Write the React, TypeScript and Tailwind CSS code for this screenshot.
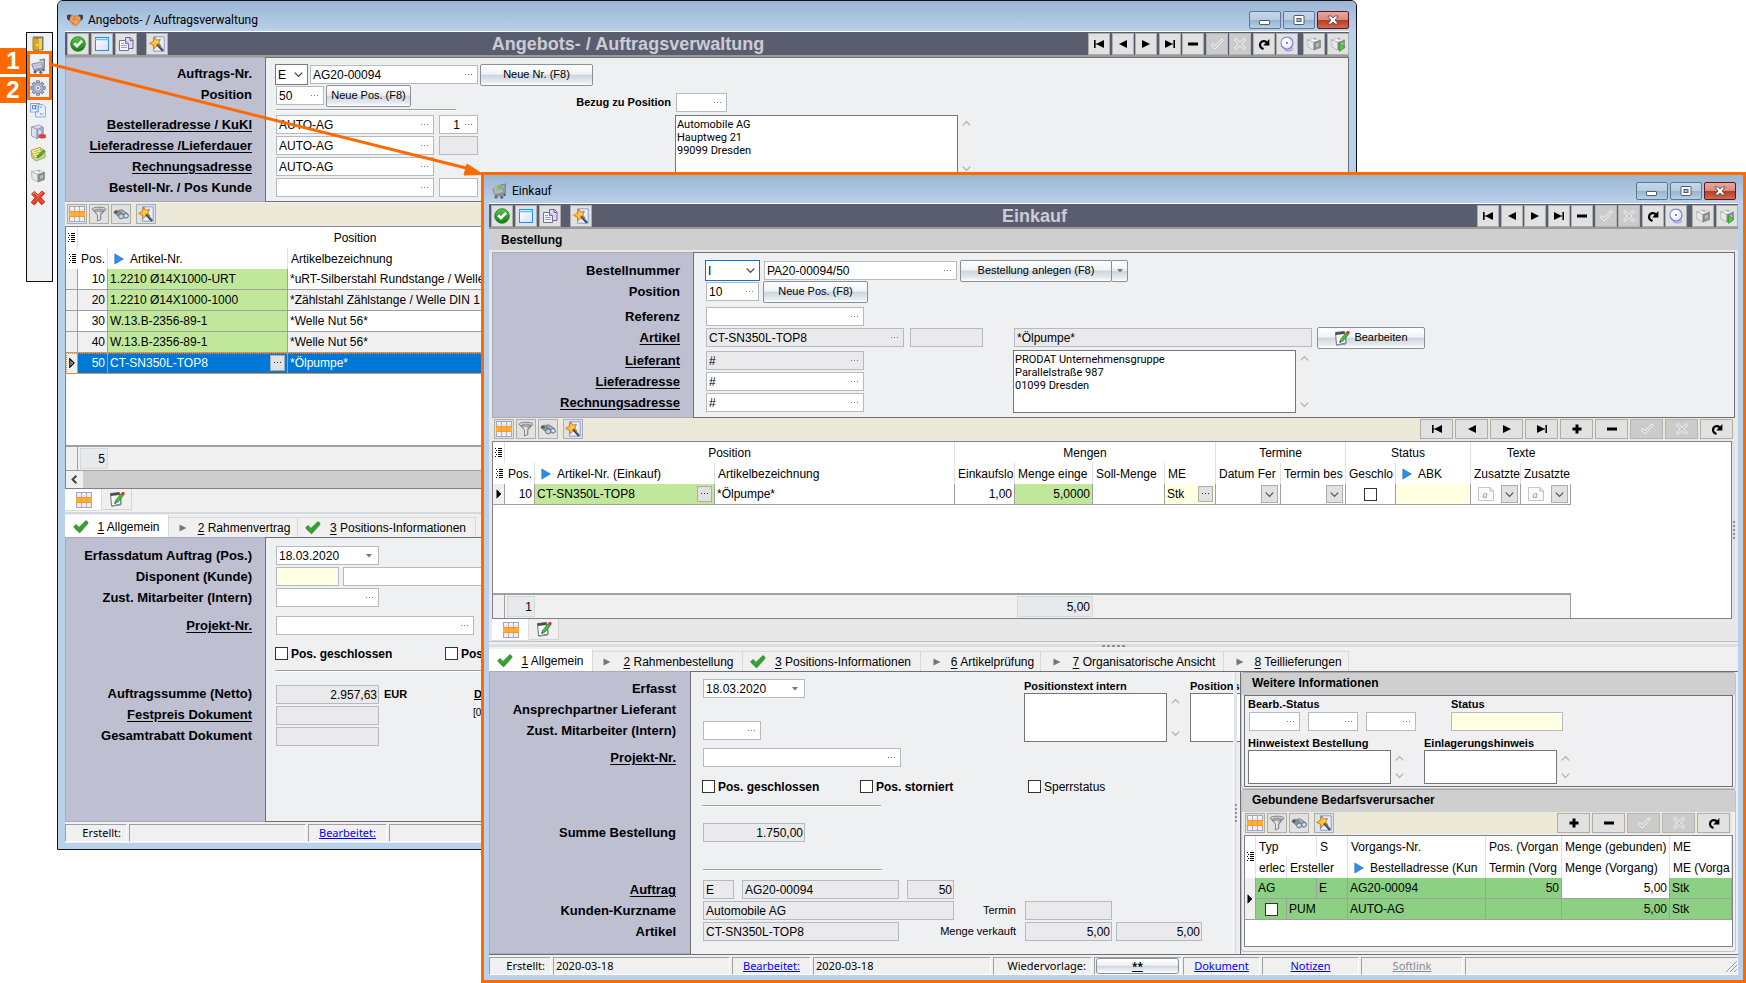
import type { ReactNode } from "react";

/* ---------- icons ---------- */

const Dots = ({ dark = false }: { dark?: boolean }) => (
  <svg width="8" height="2" viewBox="0 0 8 2" className="shrink-0" fill={dark ? "#222" : "#7c7c7c"}>
    <rect x="0" y="0" width="1" height="1" />
    <rect x="3" y="0" width="1" height="1" />
    <rect x="6" y="0" width="1" height="1" />
  </svg>
);

const OkIcon = () => (
  <svg width="16" height="16" viewBox="0 0 16 16">
    <defs>
      <linearGradient id="okg" x1="0" y1="0" x2="0" y2="1">
        <stop offset="0" stopColor="#5fc44a" />
        <stop offset="1" stopColor="#0f7d12" />
      </linearGradient>
    </defs>
    <circle cx="8" cy="8" r="7.3" fill="url(#okg)" stroke="#1c7a1c" strokeWidth=".8" />
    <path d="M3.2 8.2 L5.2 6.2 L7 8 L11 3.9 L13 5.8 L7 12 Z" fill="#fff" />
  </svg>
);

const WindowIcon = () => (
  <svg width="16" height="16" viewBox="0 0 16 16">
    <defs>
      <linearGradient id="wng" x1="0" y1="0" x2="1" y2="1">
        <stop offset="0" stopColor="#fff" />
        <stop offset="1" stopColor="#dcdcfa" />
      </linearGradient>
    </defs>
    <rect x="1.5" y="1.5" width="13" height="13" fill="url(#wng)" stroke="#1a94f2" />
    <path d="M1 3.5H15" stroke="#5cc3ff" strokeWidth="1.5" />
    <path d="M1 1.5H15" stroke="#1a94f2" />
  </svg>
);

const CopyIcon = () => (
  <svg width="16" height="16" viewBox="0 0 16 16">
    <path d="M7.5 1.5H12.5L15 4V12.5H7.5Z" fill="#dcd8ee" stroke="#7864a4" />
    <path d="M12 1.5V4.5H15" fill="none" stroke="#7864a4" />
    <path d="M1.5 4.5H7.5L10.5 7.5V14.5H1.5Z" fill="#f4f5fb" stroke="#6c7594" />
    <path d="M7.5 4.5V7.5H10.5" fill="#cfd4e8" stroke="#6c7594" />
    <path d="M3 9.5H9M3 11.5H9M3 7.5H6" stroke="#9aa2bf" />
  </svg>
);

const WizardIcon = () => (
  <svg width="16" height="16" viewBox="0 0 16 16">
    <path d="M4.5 .8H15.2V15.2H4.5Z" fill="#e8effc" stroke="#7f9fdc" />
    <path d="M5.8 1L7.6 4.2L11.4 3.4L9.8 7L12 10L8 9.8L5.2 12.6L4.2 9L.6 7.4L4.2 5.4Z" fill="#ffc03a" stroke="#cf7414" strokeWidth=".9" />
    <path d="M5.8 3L6.8 5.4L9.6 5L8 7Z" fill="#ffe9a0" />
    <path d="M8.2 8.2L14 14.8" stroke="#333a48" strokeWidth="2.4" />
    <path d="M8.8 8.2L14 13.8" stroke="#a4adbd" strokeWidth=".8" />
  </svg>
);

const GridIcon = () => (
  <svg width="16" height="16" viewBox="0 0 16 16">
    <rect x=".5" y=".5" width="15" height="15" fill="#f3f3fb" stroke="#a4a4bc" />
    <path d="M5.5 1V15M10.5 1V15" stroke="#a4a4bc" />
    <path d="M1 3.5H15M1 12.800H15" stroke="#dcdcec" strokeWidth=".7" />
    <rect x="0" y="5" width="16" height="6" fill="#fbae3c" />
    <path d="M0 5.400H16M0 10.600H16" stroke="#ec931e" strokeWidth=".8" />
    <path d="M5.5 6V10M10.5 6V10" stroke="#f3a02c" />
  </svg>
);

const FilterIcon = () => (
  <svg width="16" height="16" viewBox="0 0 16 16">
    <defs>
      <linearGradient id="fng" x1="0" y1="0" x2="1" y2="0">
        <stop offset="0" stopColor="#777" />
        <stop offset=".45" stopColor="#eee" />
        <stop offset="1" stopColor="#666" />
      </linearGradient>
    </defs>
    <path d="M1.5 3.5L6.500 9V15L9.800 13.500V9L14.5 3.5Z" fill="url(#fng)" stroke="#5c5c5c" strokeWidth=".7" />
    <ellipse cx="8" cy="3.2" rx="6.8" ry="2" fill="#e4e4e4" stroke="#6a6a6a" strokeWidth=".8" />
    <ellipse cx="8.2" cy="3.4" rx="4.5" ry="1" fill="#9a9a9a" />
  </svg>
);

const BinocularsIcon = () => (
  <svg width="16" height="16" viewBox="0 0 16 16">
    <path d="M.8 6.500Q1.600 3.800 4.600 4.200L10 7.600V11.500L7.400 12.300Z" fill="#8f9498" stroke="#5a5d60" strokeWidth=".6" />
    <path d="M6 4.200Q8.500 3 10.400 4.600L15 8V11L12 12Z" fill="#a8acb0" stroke="#5a5d60" strokeWidth=".6" />
    <circle cx="8.200" cy="10.400" r="2.500" fill="#bcd8f2" stroke="#5d656d" strokeWidth=".9" />
    <circle cx="13" cy="9.800" r="2.300" fill="#d0e5f8" stroke="#5d656d" strokeWidth=".9" />
    <ellipse cx="3" cy="6.200" rx="1.700" ry="1.300" fill="#56595c" />
  </svg>
);

type NavKind = "first" | "prev" | "next" | "last" | "plus" | "minus" | "check" | "cancel" | "refresh";

const NavIcon = ({ kind }: { kind: NavKind }) => (
  <svg width="14" height="14" viewBox="0 0 14 14">
    {kind === "first" && <path d="M2 3H3.6V11H2ZM12 3V11L5 7.6V7.6H3V6.4H5Z" />}
    {kind === "prev" && <path d="M11 3V11L3 7Z" />}
    {kind === "next" && <path d="M3 3V11L11 7Z" />}
    {kind === "last" && <path d="M10.4 3H12V11H10.4ZM2 3V11L9 7.6H11V6.4H9Z" />}
    {kind === "plus" && <path d="M5.5 2.5H8.5V5.5H11.5V8.5H8.5V11.5H5.5V8.5H2.5V5.5H5.5Z" />}
    {kind === "minus" && <path d="M2 5.5H12V8.5H2Z" />}
    {kind === "check" && <path d="M1.2 8.2L3 6.6L5.2 8.8L11.8 1.8L13.2 3.2L5.2 12Z" fill="#c4c4c4" stroke="#fff" strokeWidth=".9" />}
    {kind === "cancel" && (
      <path d="M1.6 3L3.2 1.6L7 5.4L10.8 1.6L12.4 3L8.6 7L12.4 11L10.8 12.4L7 8.6L3.2 12.4L1.6 11L5.4 7Z" fill="#c4c4c4" stroke="#fff" strokeWidth=".9" />
    )}
    {kind === "refresh" && (
      <>
        <path d="M6.5 12Q1.8 10 3.4 6.2Q5.8 2.6 10 5.4" fill="none" stroke="#000" strokeWidth="2.2" />
        <path d="M12.4 2V8.4H6.2Z" />
      </>
    )}
  </svg>
);

const BellIcon = () => (
  <svg width="16" height="16" viewBox="0 0 16 16">
    <ellipse cx="9.500" cy="12.8" rx="4" ry="2.2" fill="#cfcff0" stroke="#8484c4" strokeWidth=".8" />
    <circle cx="8" cy="7" r="6" fill="#e6e6fc" stroke="#7c7cc8" strokeWidth="1.100" />
    <circle cx="6.800" cy="6.2" r="4.2" fill="#fff" opacity=".8" />
    <circle cx="8" cy="7" r="1" fill="#5c5ca4" />
  </svg>
);

const CubeIcon = ({ play = false }: { play?: boolean }) => (
  <svg width="16" height="16" viewBox="0 0 16 16">
    <path d="M1.5 3.8L9 2L14.5 4.2L8 6.4Z" fill="#f8f9f8" stroke="#a8aaa8" strokeWidth=".6" />
    <path d="M1.5 3.8L8 6.4V14L2 11Z" fill="#e8e9e8" stroke="#a0a2a0" strokeWidth=".6" />
    <path d="M8 6.4L14.5 4.2V11.6L8 14Z" fill="#8e918f" stroke="#777" strokeWidth=".6" />
    <path d="M10 7.8L13 6.8V10L10 11Z" fill="#b9bcba" />
    <path d="M7.5 2.5L10 3.5" stroke="#58b99a" strokeWidth="1.2" />
    {play && <path d="M9.500 7.500V15.500L15 11.500Z" fill="#47d430" stroke="#1f8a14" strokeWidth=".6" />}
  </svg>
);

const DoorIcon = () => (
  <svg width="16" height="16" viewBox="0 0 16 16">
    <rect x="3.500" y="1" width="9.500" height="13" fill="#86888c" stroke="#606266" strokeWidth=".8" />
    <path d="M3 1.5L8.600 2.800V15.300L3 13.8Z" fill="#d9a820" stroke="#94700c" strokeWidth=".8" />
    <rect x="8.400" y="2.400" width="3.600" height="11" fill="#f8d240" />
    <circle cx="7" cy="9" r=".9" fill="#fff2b0" />
  </svg>
);

const CartIcon = ({ full = false }: { full?: boolean }) => (
  <svg width="16" height="16" viewBox="0 0 16 16">
    <path d="M9.500 2.200L14.200 1.500V9.800L12.6 11.6" fill="none" stroke="#85868c" strokeWidth="1.600" />
    <path d="M1.800 6L12 4L13 9.6L3.6 11.6Z" fill={full ? "#b4b8b8" : "#cacae6"} stroke="#82829c" strokeWidth=".9" />
    {full && <path d="M2.400 6L4.500 2.500L8.500 2L9 5Z" fill="#ee98a4" />}
    {full && <path d="M7 1.800L11 3V6L6.500 6.500Z" fill="#5bd44a" />}
    <path d="M3.600 11.800L12.6 10.200L13.200 12.200L4.600 14Z" fill="#8a8b92" />
    <circle cx="5" cy="14" r="1.500" fill="#606168" />
    <circle cx="10.800" cy="14.200" r="1.500" fill="#606168" />
    <circle cx="13.600" cy="12" r="1.200" fill="#606168" />
    <path d="M3 8.4L12 6.4" stroke="#a3a3c4" strokeWidth=".6" />
  </svg>
);

const teeth = [0, 45, 90, 135, 180, 225, 270, 315];

const GearIcon = () => (
  <svg width="16" height="16" viewBox="0 0 16 16">
    {teeth.map((a) => (
      <rect key={a} x="6.5" y=".8" width="3" height="3.4" fill="#a9afc8" stroke="#6b728e" strokeWidth=".7" transform={`rotate(${a} 8 8)`} />
    ))}
    <circle cx="8" cy="8" r="5.2" fill="#bcc2d8" stroke="#6b728e" strokeWidth=".7" />
    <circle cx="8" cy="8" r="3.1" fill="#e6e9f2" stroke="#7880a0" strokeWidth=".8" />
    <circle cx="8" cy="8" r="1.200" fill="#8890ac" />
  </svg>
);

const DocsIcon = () => (
  <svg width="16" height="16" viewBox="0 0 16 16">
    <rect x=".7" y="1.5" width="9" height="8.5" fill="#fff" stroke="#7d9ee0" />
    <rect x="2.6" y="3.6" width="3" height="3.4" fill="#cddafa" stroke="#456fce" strokeWidth=".8" />
    <path d="M7 1.5V10" stroke="#7d9ee0" />
    <path d="M8.500 2.500H13L15.400 5V15H5.500V10H8.500Z" fill="#eaf2ff" stroke="#84abe8" />
    <path d="M10 11L11.500 13L13 11.500M9.500 5H12" fill="none" stroke="#5c8be0" />
  </svg>
);

const CrateIcon = () => (
  <svg width="16" height="16" viewBox="0 0 16 16">
    <path d="M1.500 3L9 1L13 3V11L7 14.500L1.500 12Z" fill="#dcdff0" stroke="#8a8fa9" strokeWidth=".8" />
    <path d="M7 5.2L13 3V11L7 14.500Z" fill="#a9aeca" stroke="#8a8fa9" strokeWidth=".8" />
    <path d="M1.500 3L7 5.2V14.500" fill="none" stroke="#8a8fa9" strokeWidth=".8" />
    <rect x="8.4" y="6.4" width="2.4" height="3.4" fill="#dfe4fa" />
    <rect x="9.2" y="10.800" width="6.6" height="3.2" rx="1.4" fill="#e8472a" stroke="#a82812" strokeWidth=".6" />
  </svg>
);

const NoteIcon = () => (
  <svg width="16" height="16" viewBox="0 0 16 16">
    <path d="M1 4.5L10 1.5L15 5V11.5L6 15L2 12Z" fill="#c4e08c" stroke="#7f944c" strokeWidth=".7" />
    <path d="M1 4.5L10 1.5L12.4 9.5L4.4 12Z" fill="#fdf29a" stroke="#b09a2c" strokeWidth=".7" />
    <path d="M3.4 6L9.4 4M4 8L10 6M4.8 10L8 9" stroke="#a9923a" strokeWidth=".7" />
    <path d="M7 12L8 9L13.6 4L15 5.4L9.6 11Z" fill="#4fae34" stroke="#2c7818" strokeWidth=".6" />
  </svg>
);

const RedXIcon = () => (
  <svg width="16" height="16" viewBox="0 0 16 16">
    <path d="M1.5 4L4.6 1.4L8 5L11.8 1L14.8 3.2L11 7.4L14.8 12L11.6 14.8L8 10.6L4.4 15L1.2 12.4L5 7.8Z" fill="#e8442e" stroke="#a82418" strokeWidth=".8" />
    <path d="M3 4L4.6 2.6L8 6.2L11.8 2.2" fill="none" stroke="#ff9a84" strokeWidth=".8" />
  </svg>
);

const HandshakeIcon = () => (
  <svg width="16" height="16" viewBox="0 0 16 16">
    <path d="M0 3L4 2.5L5.5 6L2 9L0 6.5Z" fill="#33425e" />
    <path d="M16 3L12 2.5L10.5 6L14 9L16 6.5Z" fill="#33425e" />
    <path d="M3.4 4.6Q6 2.8 8 4.4Q10.4 2.6 12.8 4.6L13.8 8Q11 12.6 8.6 14Q4.4 12 2.6 8.2Z" fill="#f3a25e" stroke="#b5642a" strokeWidth=".7" />
    <path d="M8 4.6L6 7.6Q8 8.4 9.2 6.8L12.4 9.6M5 9.6L7.4 12" fill="none" stroke="#b5642a" strokeWidth=".7" />
  </svg>
);

const EditIcon = () => (
  <svg width="16" height="16" viewBox="0 0 16 16">
    <path d="M1.5 2.5L10.5 1.5L12 13L2.5 15Z" fill="#fafafa" stroke="#6e6e80" />
    <path d="M1.5 2.6L10.4 1.6V4L1.7 5Z" fill="#4c4c50" />
    <path d="M12 5V14L3 15.2" fill="none" stroke="#8888b4" />
    <path d="M5.6 12.6L6.6 9.4L12 2.8L14.4 4.6L9 11Z" fill="#3fc33a" stroke="#1d7a1d" strokeWidth=".7" />
    <path d="M12 2.8L13 1L15.6 1.4L15.6 3L14.4 4.6Z" fill="#e02a20" />
    <path d="M5.6 12.6L6 11.2L7 12Z" fill="#222" />
  </svg>
);

const TickIcon = () => (
  <svg width="16" height="14" viewBox="0 0 16 14" className="shrink-0">
    <path d="M2 9L4 6.6L6.8 9.4L14 2.4L15.6 4L7 13.6Z" fill="#b9bdb9" />
    <path d="M.6 7L3 4.400L6 7.400L13 .6L15.200 2.6L6.400 12.600Z" fill="#2fa829" stroke="#167914" strokeWidth=".7" />
  </svg>
);

const GrayPlay = () => (
  <svg width="8" height="8" viewBox="0 0 8 8" className="shrink-0">
    <path d="M.5 .5V7.5L7.5 4Z" fill="#777" />
  </svg>
);

const BluePlay = () => (
  <svg width="10" height="12" viewBox="0 0 10 12" className="shrink-0">
    <path d="M.8 1V11L9.4 6Z" fill="#2b90ea" stroke="#1766bd" strokeWidth=".6" />
  </svg>
);

const ListMark = () => (
  <svg width="7" height="10" viewBox="0 0 7 10" className="mx-auto block" fill="#000">
    {[0, 2, 4, 6, 8].map((y) => (
      <g key={y}>
        <rect x={y % 4 === 0 ? 0 : 1} y={y} width="1" height="1" />
        <rect x="3" y={y} width="4" height="1" />
      </g>
    ))}
  </svg>
);

const Chevron = ({ dir = "down", color = "#444" }: { dir?: "up" | "down" | "left"; color?: string }) => (
  <svg width="9" height="9" viewBox="0 0 9 9" className="pointer-events-none shrink-0" fill="none" stroke={color} strokeWidth="1.3">
    {dir === "down" && <path d="M.8 2.6L4.5 6.4L8.2 2.6" />}
    {dir === "up" && <path d="M.8 6.4L4.5 2.6L8.2 6.4" />}
    {dir === "left" && <path d="M6.4 .8L2.6 4.5L6.4 8.2" strokeWidth="2" />}
  </svg>
);

const DownTriangle = () => (
  <svg width="6" height="4" viewBox="0 0 6 4" className="shrink-0">
    <path d="M0 0H6L3 3.4Z" fill="#777" />
  </svg>
);

const CurrentRow = ({ hollow = false }: { hollow?: boolean }) => (
  <svg width="6" height="10" viewBox="0 0 6 10" className="mx-auto block">
    <path d="M.8 .8V9.2L5 5Z" fill={hollow ? "#fff" : "#000"} stroke="#000" strokeWidth={hollow ? 1.2 : 0.6} />
    {hollow && <path d="M2.200 3.500V6.500" stroke="#000" strokeWidth=".8" />}
  </svg>
);

const TextIcon = () => (
  <svg width="16" height="14" viewBox="0 0 16 14" className="shrink-0">
    <path d="M.5 .5H12L15.5 4V13.5H.5Z" fill="#fbfbfb" stroke="#c6c6c6" />
    <path d="M12 .5V4H15.5" fill="none" stroke="#b5b5b5" />
    <text x="4.4" y="10.6" fontSize="10" fontStyle="italic" fill="#8b8b8b" fontFamily="Liberation Serif">a</text>
  </svg>
);

/* ---------- controls ---------- */

type FieldProps = {
  id: string;
  label?: string;
  width: string;
  value?: string;
  dots?: boolean;
  date?: boolean;
  right?: boolean;
  tone?: "white" | "gray" | "yellow";
};

const tones = { white: "bg-white", gray: "bg-[#eaeaec]", yellow: "bg-[#ffffe1]" };

const Field = ({ id, label, width, value = "", dots, date, right, tone = "white" }: FieldProps) => (
  <div className={`flex h-[19px] shrink-0 items-center border border-[#b5b9c0] ${tones[tone]} ${width} ${dots ? "pr-1" : date ? "pr-[6px]" : ""}`}>
    <input
      id={id}
      aria-label={label}
      defaultValue={value}
      className={`h-full w-0 min-w-0 flex-1 bg-transparent text-[12px] text-black outline-none ${right ? "pr-px text-right" : "pl-[2px]"} ${right && dots ? "mr-1" : ""}`}
    />
    {dots && <Dots />}
    {date && <DownTriangle />}
  </div>
);

const Combo = ({ id, value, width, active = false }: { id: string; value: string; width: string; active?: boolean }) => (
  <div className={`grid h-[21px] shrink-0 items-center border bg-white ${active ? "border-[#0078d7]" : "border-[#7a7a7a]"} ${width}`}>
    <select id={id} defaultValue={value} className="col-start-1 row-start-1 h-full w-full appearance-none bg-transparent px-[2px] text-[12px] outline-none">
      <option>{value}</option>
    </select>
    <span className="pointer-events-none col-start-1 row-start-1 mr-1 justify-self-end">
      <Chevron />
    </span>
  </div>
);

const Push = ({ children, width }: { children: ReactNode; width: string }) => (
  <button
    type="button"
    className={`flex h-[22px] shrink-0 items-center justify-center gap-1 rounded-[2px] border border-[#8a909b] bg-[linear-gradient(#ffffff,#eff2f5_45%,#cdd6de_52%,#e6ebef_85%,#ffffff)] text-[11px] text-black ${width}`}
  >
    {children}
  </button>
);

const Check = ({ id, children, bold = true }: { id: string; children: ReactNode; bold?: boolean }) => (
  <span className="flex shrink-0 items-center gap-[3px] whitespace-nowrap">
    <input id={id} type="checkbox" className="h-[13px] w-[13px] appearance-none border border-[#333] bg-white checked:bg-[#333]" />
    <label htmlFor={id} className={bold ? "text-[12px] font-bold" : "text-[12px]"}>
      {children}
    </label>
  </span>
);

const ScrollHints = () => (
  <div className="flex w-4 shrink-0 flex-col items-center justify-between bg-[#f0f0f0] py-1">
    <Chevron dir="up" color="#b0b0b0" />
    <Chevron color="#b0b0b0" />
  </div>
);

const Memo = ({ id, label, width, height, value = "" }: { id: string; label?: string; width: string; height: string; value?: string }) => (
  <div className={`flex shrink-0 ${height}`}>
    <textarea
      id={id}
      aria-label={label}
      defaultValue={value}
      className={`block h-full resize-none overflow-hidden border border-[#767676] bg-white px-px pt-[2px] font-['Roboto',sans-serif] text-[11px] leading-[13px] outline-none ${width}`}
    />
    <ScrollHints />
  </div>
);

const L = ({ htmlFor, children, u = false, gap = "" }: { htmlFor: string; children: ReactNode; u?: boolean; gap?: string }) => (
  <label htmlFor={htmlFor} className={`flex h-[21px] items-center text-[13px] font-bold whitespace-nowrap ${u ? "underline underline-offset-2" : ""} ${gap}`}>
    {children}
  </label>
);

const Labels = ({ children, pad }: { children: ReactNode; pad: string }) => (
  <div className={`flex shrink-0 flex-col items-end border border-r-0 border-[#a9aabc] bg-[#bebfd0] ${pad}`}>{children}</div>
);

const Row = ({ children, gap = "" }: { children?: ReactNode; gap?: string }) => <div className={`flex h-[21px] items-center ${gap}`}>{children}</div>;

const Rule = ({ className }: { className: string }) => <hr className={`h-[2px] border-t border-b border-t-[#a0a0a0] border-b-white ${className}`} />;

const ToolButton = ({ name, children, size = "h-[22px] w-[22px]", off = false }: { name: string; children: ReactNode; size?: string; off?: boolean }) => (
  <button
    type="button"
    aria-label={name}
    className={`flex shrink-0 items-center justify-center border ${size} ${off ? "border-[#b4b4b4] bg-[#cbcbcb]" : "border-[#adadad] bg-[#e1e1e1]"}`}
  >
    {children}
  </button>
);

const navNames: Record<NavKind, string> = {
  first: "Erster",
  prev: "Zurück",
  next: "Weiter",
  last: "Letzter",
  plus: "Neu",
  minus: "Löschen",
  check: "Speichern",
  cancel: "Abbrechen",
  refresh: "Aktualisieren",
};

const Nav = ({ kinds, size }: { kinds: NavKind[]; size: string }) => (
  <>
    {kinds.map((k) => (
      <ToolButton key={k} name={navNames[k]} size={size} off={k === "check" || k === "cancel"}>
        <NavIcon kind={k} />
      </ToolButton>
    ))}
  </>
);

const HeadBar = ({ title }: { title: string }) => (
  <div className="flex h-[26px] shrink-0 items-center gap-[2px] border-t border-b-2 border-t-white border-b-[#9a9a9a] bg-[#5a5d6e] pl-[2px]">
    <ToolButton name="OK">
      <OkIcon />
    </ToolButton>
    <ToolButton name="Fenster">
      <WindowIcon />
    </ToolButton>
    <ToolButton name="Kopieren">
      <CopyIcon />
    </ToolButton>
    <span className="w-[5px]" />
    <ToolButton name="Assistent">
      <WizardIcon />
    </ToolButton>
    <h1 className="flex-1 text-center text-[18px] leading-[22px] font-bold text-[#cbccd8]">{title}</h1>
    <div className="flex w-[210px] justify-between">
      <Nav kinds={["first", "prev", "next", "last", "minus", "check", "cancel", "refresh"]} size="h-[22px] w-[22px]" />
      <ToolButton name="Erinnerung">
        <BellIcon />
      </ToolButton>
    </div>
    <span className="w-px" />
    <ToolButton name="Drucken">
      <CubeIcon />
    </ToolButton>
    <ToolButton name="Ausführen">
      <CubeIcon play />
    </ToolButton>
  </div>
);

const TitleBar = ({ icon, title, size }: { icon: ReactNode; title: string; size: string }) => (
  <div className={`flex shrink-0 items-center bg-[linear-gradient(#9bb5d3,#b9d1ea)] pr-[7px] ${size}`}>
    {icon}
    <span className="ml-[5px] flex-1 font-['Roboto',sans-serif] text-[12px]">{title}</span>
    <div className="flex gap-[2px]">
      <button type="button" aria-label="Minimieren" className="flex h-[18px] w-8 items-center justify-center rounded-[2px] border border-[#5f7590] bg-[linear-gradient(#c4d7ea,#b4cce3_50%,#94b2cf_50%,#b4d0e8)]">
        <svg width="12" height="10" viewBox="0 0 12 10">
          <rect x=".5" y="5.5" width="10" height="4" rx=".6" fill="#fff" stroke="#50586a" />
        </svg>
      </button>
      <button type="button" aria-label="Maximieren" className="flex h-[18px] w-8 items-center justify-center rounded-[2px] border border-[#5f7590] bg-[linear-gradient(#c4d7ea,#b4cce3_50%,#94b2cf_50%,#b4d0e8)]">
        <svg width="12" height="10" viewBox="0 0 12 10">
          <rect x="1" y=".5" width="10" height="9" rx=".6" fill="#fff" stroke="#50586a" />
          <rect x="4" y="3.5" width="4" height="3" fill="#a9c0d8" stroke="#50586a" />
        </svg>
      </button>
      <button type="button" aria-label="Schließen" className="flex h-[18px] w-8 items-center justify-center rounded-[2px] border border-[#5a1a1e] bg-[linear-gradient(#e6a89c,#d98b7b_48%,#b93a22_50%,#cf6a4e)]">
        <svg width="12" height="10" viewBox="0 0 12 10">
          <path d="M.8 1H4.2L6 3L7.8 1H11.2L8 5L11.2 9H7.8L6 7L4.2 9H.8L4 5Z" fill="#fff" stroke="#50404a" strokeWidth=".8" />
        </svg>
      </button>
    </div>
  </div>
);

const GridBar = ({ children }: { children?: ReactNode }) => (
  <div className="flex h-[22px] shrink-0 items-center gap-[2px] bg-[#ece9d8] pr-[2px] pl-[2px]">
    <ToolButton name="Tabelle" size="h-5 w-5">
      <GridIcon />
    </ToolButton>
    <ToolButton name="Filter" size="h-5 w-5">
      <FilterIcon />
    </ToolButton>
    <ToolButton name="Suchen" size="h-5 w-5">
      <BinocularsIcon />
    </ToolButton>
    <span className="w-px" />
    <ToolButton name="Assistent" size="h-5 w-5">
      <WizardIcon />
    </ToolButton>
    <div className="flex flex-1 justify-end gap-[2px]">{children}</div>
  </div>
);

const ViewTabs = () => (
  <div className="flex h-[22px] shrink-0">
    <button type="button" aria-label="Tabellenansicht" className="flex w-[37px] items-center justify-center border-r border-b border-[#dcdcdc] bg-white pl-[2px]">
      <GridIcon />
    </button>
    <button type="button" aria-label="Bearbeitungsansicht" className="flex h-[21px] w-[30px] items-center justify-center border-r border-b border-[#d4d4d4] bg-[#f0f0f0]">
      <EditIcon />
    </button>
  </div>
);

type TabInfo = { n: string; text: string; on?: boolean; width: string; pad: string };

const Tabs = ({ items }: { items: TabInfo[] }) => (
  <div role="tablist" className="flex h-[22px] shrink-0 bg-[#f0f0f0] text-[12px]">
    {items.map((t, i) => (
      <button
        key={t.n}
        type="button"
        role="tab"
        aria-selected={i === 0}
        className={`flex shrink-0 items-center border-r border-[#d9d9d9] whitespace-nowrap ${t.width} ${t.pad} ${i === 0 ? "bg-white pt-px" : "mt-[2px] border-t"}`}
      >
        {t.on ? <TickIcon /> : <GrayPlay />}
        <span className={t.on ? "flex-1 text-center" : "flex-1 pl-1 text-center"}>
          <u className="underline-offset-2">{t.n}</u> {t.text}
        </span>
      </button>
    ))}
  </div>
);

const Cell = ({ width, children, align = "justify-center" }: { width: string; children?: ReactNode; align?: string }) => (
  <div className={`flex h-[18px] items-center overflow-hidden border border-t-[#a0a0a0] border-r-white border-b-white border-l-[#a0a0a0] whitespace-nowrap ${width} ${align}`}>{children}</div>
);

const Dd = () => (
  <span className="flex h-[18px] w-[17px] shrink-0 items-center justify-center border border-[#adadad] bg-[#e1e1e1]">
    <Chevron color="#555" />
  </span>
);

const Ellipsis = () => (
  <button type="button" aria-label="Auswählen" className="flex h-4 w-[15px] shrink-0 items-center justify-center border border-[#adadad] bg-[#e1e1e1]">
    <Dots dark />
  </button>
);

const th = "h-[21px] overflow-hidden border-r border-[#e0e0e0] px-[3px] py-0 text-left font-normal whitespace-nowrap";
const thc = "h-[21px] overflow-hidden border-r border-[#e0e0e0] p-0 text-center font-normal whitespace-nowrap";
const mk = "h-[21px] border-r border-[#e0e0e0] p-0";
const td = "h-[21px] overflow-hidden border-r border-b border-[#a0a0a0] px-[2px] py-0 whitespace-nowrap";

/* ---------- back window ---------- */

const orderRows = [
  { pos: 10, nr: "1.2210 Ø14X1000-URT", name: "*uRT-Silberstahl Rundstange / Welle" },
  { pos: 20, nr: "1.2210 Ø14X1000-1000", name: "*Zählstahl Zählstange / Welle DIN 1" },
  { pos: 30, nr: "W.13.B-2356-89-1", name: "*Welle Nut 56*" },
  { pos: 40, nr: "W.13.B-2356-89-1", name: "*Welle Nut 56*" },
  { pos: 50, nr: "CT-SN350L-TOP8", name: "*Ölpumpe*", selected: true },
];

const OrderTable = () => (
  <table className="w-[567px] table-fixed border-separate border-spacing-0 text-[12px]">
    <colgroup>
      <col className="w-3" />
      <col className="w-[30px]" />
      <col className="w-[180px]" />
      <col className="w-[345px]" />
    </colgroup>
    <thead>
      <tr>
        <th className={mk}><ListMark /></th>
        <th colSpan={3} className={thc}>Position</th>
      </tr>
      <tr>
        <th className="h-[21px] p-0"><ListMark /></th>
        <th className={th}>Pos.</th>
        <th className={th}>
          <span className="flex items-center gap-[6px] pl-[3px]"><BluePlay />Artikel-Nr.</span>
        </th>
        <th className={th}>Artikelbezeichnung</th>
      </tr>
    </thead>
    <tbody>
      {orderRows.map((r, i) => {
        const bg = r.selected ? "bg-[#0078d7] text-white" : i % 2 ? "bg-[#f0f0f0]" : "bg-white";
        return (
          <tr key={r.pos} className={r.selected ? "outline-1 -outline-offset-1 outline-[#e08a4a] outline-dotted" : ""}>
            <td className="h-[21px] border-r border-b border-[#a0a0a0] bg-[#f0f0f0] p-0">{r.selected && <CurrentRow hollow />}</td>
            <td className={`${td} text-right ${bg}`}>{r.pos}</td>
            <td className={`${td} ${r.selected ? bg : "bg-[#c1e79a]"}`}>
              <span className="flex items-center justify-between">
                {r.nr}
                {r.selected && <Ellipsis />}
              </span>
            </td>
            <td className={`${td} ${bg}`}>{r.name}</td>
          </tr>
        );
      })}
    </tbody>
  </table>
);

const OrderWindow = () => (
  <section className="absolute top-0 left-[57px] flex h-[850px] w-[1300px] flex-col overflow-hidden rounded-t-[6px] border border-[#111] bg-[#b9d1ea]">
    <TitleBar icon={<HandshakeIcon />} title="Angebots- / Auftragsverwaltung" size="h-[30px] pl-[9px] pt-[7px]" />
    <div className="mx-[7px] mb-[6px] flex min-h-0 flex-1 flex-col bg-[#f0f0f0]">
      <HeadBar title="Angebots- / Auftragsverwaltung" />
      <div className="flex h-[145px] shrink-0">
        <Labels pad="w-[200px] pr-[13px] pt-[5px]">
          <L htmlFor="auftrag">Auftrags-Nr.</L>
          <L htmlFor="pos">Position</L>
          <L htmlFor="besteller" u gap="mt-[9px]">Bestelleradresse / KuKl</L>
          <L htmlFor="liefer" u>Lieferadresse /Lieferdauer</L>
          <L htmlFor="rechnung" u>Rechnungsadresse</L>
          <L htmlFor="bestellnr">Bestell-Nr. / Pos Kunde</L>
        </Labels>
        <div className="flex-1 border border-[#6f7076] bg-[#eff0f2] pt-[6px] pl-[9px]">
          <Row gap="gap-[2px]">
            <Combo id="auftragArt" value="E" width="w-[33px]" />
            <Field id="auftrag" width="w-[168px]" value="AG20-00094" dots />
            <Push width="w-[113px]">Neue Nr. (F8)</Push>
          </Row>
          <div className="flex">
            <div className="w-[298px] shrink-0 pl-px">
              <Row gap="gap-[2px]">
                <Field id="pos" width="w-12" value="50" dots />
                <Push width="w-[85px]">Neue Pos. (F8)</Push>
              </Row>
              <Rule className="mt-[3px] mb-[3px] w-[180px]" />
              <Row gap="gap-[5px]">
                <Field id="besteller" width="w-[158px]" value="AUTO-AG" dots />
                <Field id="kukl" label="KuKl" width="w-[39px]" value="1" dots right />
              </Row>
              <Row gap="gap-[5px]">
                <Field id="liefer" width="w-[158px]" value="AUTO-AG" dots />
                <Field id="dauer" label="Lieferdauer" width="w-[39px]" tone="gray" />
              </Row>
              <Row>
                <Field id="rechnung" width="w-[158px]" value="AUTO-AG" dots />
              </Row>
              <Row gap="gap-[5px]">
                <Field id="bestellnr" width="w-[158px]" dots />
                <Field id="poskunde" label="Pos Kunde" width="w-[39px]" />
              </Row>
            </div>
            <div className="pt-[7px]">
              <Row gap="gap-[5px]">
                <label htmlFor="bezug" className="w-[98px] text-right text-[11px] font-bold whitespace-nowrap">Bezug zu Position</label>
                <Field id="bezug" width="w-[51px]" dots />
              </Row>
              <div className="mt-[2px] ml-[102px]">
                <Memo id="adresse" label="Adresse" width="w-[283px]" height="h-[62px]" value={"Automobile AG\nHauptweg 21\n99099 Dresden"} />
              </div>
            </div>
          </div>
        </div>
      </div>
      <div className="pt-px">
        <GridBar />
      </div>
      <div className="mt-px flex min-h-0 flex-1 flex-col border border-[#7f828c] bg-white">
        <OrderTable />
        <div className="flex-1" />
        <div className="flex h-[26px] shrink-0 border-t-2 border-b border-[#a0a0a0] bg-[#f0f0f0] text-[12px]">
          <span className="w-3 border-r border-[#a0a0a0]" />
          <span className="my-px ml-[2px] flex w-7 items-center justify-end border border-[#d4d8da] bg-[#e6eaec] pr-[2px]">5</span>
        </div>
        <div className="flex h-[17px] shrink-0 items-center bg-[#cdcdcd]">
          <button type="button" aria-label="Nach links" className="flex h-full w-[17px] items-center justify-center bg-[#f0f0f0]">
            <Chevron dir="left" />
          </button>
        </div>
      </div>
      <ViewTabs />
      <div className="my-px h-[2px] bg-[#d5d8dd]" />
      <Tabs
        items={[
          { n: "1", text: "Allgemein", on: true, width: "w-[104px]", pad: "pl-2" },
          { n: "2", text: "Rahmenvertrag", width: "w-[129px]", pad: "pl-[10px]" },
          { n: "3", text: "Positions-Informationen", on: true, width: "w-[178px]", pad: "pl-[7px]" },
        ]}
      />
      <div className="flex h-[285px] shrink-0">
        <Labels pad="w-[200px] pr-[13px] pt-[7px]">
          <L htmlFor="erfasst1">Erfassdatum Auftrag (Pos.)</L>
          <L htmlFor="disponent">Disponent (Kunde)</L>
          <L htmlFor="zust1">Zust. Mitarbeiter (Intern)</L>
          <L htmlFor="projekt1" u gap="mt-[7px]">Projekt-Nr.</L>
          <L htmlFor="summe1" gap="mt-[47px]">Auftragssumme (Netto)</L>
          <L htmlFor="festpreis" u>Festpreis Dokument</L>
          <L htmlFor="rabatt">Gesamtrabatt Dokument</L>
        </Labels>
        <div className="flex-1 border border-[#6f7076] bg-[#eff0f2] pt-[7px] pl-[10px]">
          <Row><Field id="erfasst1" width="w-[103px]" value="18.03.2020" date /></Row>
          <Row gap="gap-1">
            <Field id="disponent" width="w-[63px]" tone="yellow" />
            <Field id="disponentName" label="Disponent Name" width="w-[240px]" />
          </Row>
          <Row><Field id="zust1" width="w-[103px]" dots /></Row>
          <Row gap="mt-[7px]"><Field id="projekt1" width="w-[198px]" dots /></Row>
          <div className="-ml-px">
            <Row gap="mt-[7px]">
              <span className="w-[170px]"><Check id="geschl1">Pos. geschlossen</Check></span>
              <Check id="storn1">Pos. storniert</Check>
            </Row>
            <Rule className="mt-[6px] mb-3 w-[360px]" />
          </div>
          <Row>
            <Field id="summe1" width="w-[103px]" value="2.957,63" right tone="gray" />
            <span className="ml-[5px] w-[90px] text-[11px] font-bold">EUR</span>
            <a href="#dokument1" className="text-[11px] font-bold underline">Dokument</a>
          </Row>
          <Row>
            <Field id="festpreis" width="w-[103px]" tone="gray" />
            <span className="ml-[94px] self-start text-[10px]">[0,00]</span>
          </Row>
          <Row><Field id="rabatt" width="w-[103px]" tone="gray" /></Row>
        </div>
      </div>
      <div className="flex h-[21px] shrink-0 gap-[2px] pt-[2px] font-['Noto_Sans',sans-serif] text-[11px]">
        <Cell width="w-[62px]" align="justify-end pr-[5px]">Erstellt:</Cell>
        <Cell width="w-[177px]" />
        <Cell width="w-[79px]"><a href="#bearbeitet" className="text-[#0000ff] underline">Bearbeitet:</a></Cell>
        <Cell width="flex-1" />
      </div>
    </div>
  </section>
);

/* ---------- front window ---------- */

const PurchaseTable = () => (
  <table className="w-[1078px] table-fixed border-separate border-spacing-0 text-[12px]">
    <colgroup>
      <col className="w-3" />
      <col className="w-[30px]" />
      <col className="w-[180px]" />
      <col className="w-[240px]" />
      <col className="w-[60px]" />
      <col className="w-[78px]" />
      <col className="w-[72px]" />
      <col className="w-[51px]" />
      <col className="w-[65px]" />
      <col className="w-[65px]" />
      <col className="w-[50px]" />
      <col className="w-[75px]" />
      <col className="w-[50px]" />
      <col className="w-[50px]" />
    </colgroup>
    <thead>
      <tr>
        <th className={mk}><ListMark /></th>
        <th colSpan={3} className={thc}>Position</th>
        <th colSpan={4} className={thc}>Mengen</th>
        <th colSpan={2} className={thc}>Termine</th>
        <th colSpan={2} className={thc}>Status</th>
        <th colSpan={2} className="h-[21px] p-0 text-center font-normal">Texte</th>
      </tr>
      <tr>
        <th className="h-[21px] p-0"><ListMark /></th>
        <th className={th}>Pos.</th>
        <th className={th}>
          <span className="flex items-center gap-[6px] pl-[3px]"><BluePlay />Artikel-Nr. (Einkauf)</span>
        </th>
        <th className={th}>Artikelbezeichnung</th>
        <th className={th}>Einkaufslo</th>
        <th className={th}>Menge einge</th>
        <th className={th}>Soll-Menge</th>
        <th className={th}>ME</th>
        <th className={th}>Datum Fer</th>
        <th className={th}>Termin bes</th>
        <th className={th}>Geschlo</th>
        <th className={th}>
          <span className="flex items-center gap-[6px] pl-[3px]"><BluePlay />ABK</span>
        </th>
        <th className={th}>Zusatzte</th>
        <th className="h-[21px] overflow-hidden px-[3px] py-0 text-left font-normal whitespace-nowrap">Zusatzte</th>
      </tr>
    </thead>
    <tbody>
      <tr>
        <td className="h-[21px] border-r border-b border-[#a0a0a0] bg-[#f0f0f0] p-0"><CurrentRow /></td>
        <td className={`${td} text-right`}>10</td>
        <td className={`${td} bg-[#c1e79a]`}>
          <span className="flex items-center justify-between">CT-SN350L-TOP8<Ellipsis /></span>
        </td>
        <td className={td}>*Ölpumpe*</td>
        <td className={`${td} text-right`}>1,00</td>
        <td className={`${td} bg-[#c1e79a] text-right`}>5,0000</td>
        <td className={td} />
        <td className={`${td} bg-[#ffffe1]`}>
          <span className="flex items-center justify-between">Stk<Ellipsis /></span>
        </td>
        <td className={td}><span className="flex justify-end"><Dd /></span></td>
        <td className={td}><span className="flex justify-end"><Dd /></span></td>
        <td className={td}>
          <input type="checkbox" aria-label="Geschlossen" className="mx-auto block h-[13px] w-[13px] appearance-none border border-[#333] bg-white checked:bg-[#333]" />
        </td>
        <td className={`${td} bg-[#ffffe1]`} />
        <td className={td}><span className="flex items-center justify-end gap-[7px]"><TextIcon /><Dd /></span></td>
        <td className={td}><span className="flex items-center justify-end gap-[7px]"><TextIcon /><Dd /></span></td>
      </tr>
    </tbody>
  </table>
);

const gTd = "h-[21px] overflow-hidden border-r border-b border-[#a0a0a0] bg-[#8cd083] px-[2px] py-0 whitespace-nowrap";

const DemandTable = () => (
  <table className="w-full table-fixed border-separate border-spacing-0 text-[12px]">
    <colgroup>
      <col className="w-[11px]" />
      <col className="w-[31px]" />
      <col className="w-[30px]" />
      <col className="w-[31px]" />
      <col className="w-[138px]" />
      <col className="w-[76px]" />
      <col className="w-[108px]" />
      <col />
    </colgroup>
    <thead>
      <tr>
        <th rowSpan={2} className={mk}><ListMark /></th>
        <th colSpan={2} className={th}>Typ</th>
        <th className={th}>S</th>
        <th className={th}>Vorgangs-Nr.</th>
        <th className={th}>Pos. (Vorgan</th>
        <th className={th}>Menge (gebunden)</th>
        <th className={th}>ME</th>
      </tr>
      <tr>
        <th className={th}>erlec</th>
        <th colSpan={2} className={th}>Ersteller</th>
        <th className={th}>
          <span className="flex items-center gap-[6px] pl-[3px]"><BluePlay />Bestelladresse (Kun</span>
        </th>
        <th className={th}>Termin (Vorg</th>
        <th className={th}>Menge (Vorgang)</th>
        <th className={th}>ME (Vorga</th>
      </tr>
    </thead>
    <tbody>
      <tr>
        <td rowSpan={2} className="border-r border-b border-[#a0a0a0] bg-[#f0f0f0] p-0"><CurrentRow /></td>
        <td colSpan={2} className={gTd}>AG</td>
        <td className={gTd}>E</td>
        <td className={gTd}>AG20-00094</td>
        <td className={`${gTd} text-right`}>50</td>
        <td className={`${td} bg-white text-right`}>5,00</td>
        <td className={gTd}>Stk</td>
      </tr>
      <tr>
        <td className={gTd}>
          <input type="checkbox" aria-label="erledigt" className="mx-auto block h-[13px] w-[13px] appearance-none border border-[#333] bg-white checked:bg-[#333]" />
        </td>
        <td colSpan={2} className={gTd}>PUM</td>
        <td className={gTd}>AUTO-AG</td>
        <td className={gTd} />
        <td className={`${gTd} text-right`}>5,00</td>
        <td className={gTd}>Stk</td>
      </tr>
    </tbody>
  </table>
);

const Small = ({ htmlFor, children }: { htmlFor: string; children: ReactNode }) => (
  <label htmlFor={htmlFor} className="block text-[11px] leading-3 font-bold whitespace-nowrap">
    {children}
  </label>
);

const SidePanel = () => (
  <aside className="flex w-[498px] shrink-0 flex-col border-t border-l border-[#6f7076] bg-[#eff0f2]">
    <div className="mr-[2px] rounded-[3px] border border-[#c3c3c8] border-t-[#a8a8ae] bg-[#f0f0f2] pb-px">
      <h2 className="h-[22px] bg-[#cfcfcf] pl-[10px] text-[12px] leading-[20px] font-bold">Weitere Informationen</h2>
      <div className="mx-[2px] h-[92px] border border-[#6f7076] pt-[2px] pl-[3px]">
        <div className="flex">
          <div className="w-[203px]">
            <Small htmlFor="bstat1">Bearb.-Status</Small>
            <div className="mt-[2px] flex gap-2 pl-px">
              <Field id="bstat1" width="w-[51px]" dots />
              <Field id="bstat2" label="Bearb.-Status 2" width="w-[50px]" dots />
              <Field id="bstat3" label="Bearb.-Status 3" width="w-[50px]" dots />
            </div>
          </div>
          <div>
            <Small htmlFor="status">Status</Small>
            <div className="mt-[2px]"><Field id="status" width="w-28" tone="yellow" /></div>
          </div>
        </div>
        <div className="mt-[6px] flex">
          <div className="w-[176px]">
            <Small htmlFor="hinweis">Hinweistext Bestellung</Small>
            <div className="mt-px"><Memo id="hinweis" width="w-[143px]" height="h-[34px]" /></div>
          </div>
          <div>
            <Small htmlFor="einlager">Einlagerungshinweis</Small>
            <div className="mt-px"><Memo id="einlager" width="w-[133px]" height="h-[34px]" /></div>
          </div>
        </div>
      </div>
    </div>
    <div className="mr-[2px] mb-[2px] flex min-h-0 flex-1 flex-col rounded-[3px] border border-[#c3c3c8] border-t-[#a8a8ae] bg-[#f0f0f2] px-0 pb-1">
      <h2 className="h-[22px] shrink-0 bg-[#cfcfcf] pl-[10px] text-[12px] leading-[20px] font-bold">Gebundene Bedarfsverursacher</h2>
      <div className="mx-[2px] flex min-h-0 flex-1 flex-col">
        <div className="mr-px -ml-px">
          <GridBar>
            <Nav kinds={["plus", "minus", "check", "cancel", "refresh"]} size="h-5 w-[33px]" />
          </GridBar>
        </div>
        <div className="mt-px min-h-0 flex-1 border border-[#7f828c] bg-white">
          <DemandTable />
        </div>
      </div>
    </div>
  </aside>
);

const PurchaseWindow = () => (
  <section className="absolute top-[172px] right-0 bottom-0 left-[481px] flex flex-col overflow-hidden border-[3px] border-[#ff6a00] bg-[#b9d1ea]">
    <TitleBar icon={<CartIcon full />} title="Einkauf" size="h-[28px] pl-[7px] pt-1" />
    <div className="mx-[5px] mb-[5px] flex min-h-0 flex-1 flex-col bg-[#f0f0f0]">
      <HeadBar title="Einkauf" />
      <div className="flex min-h-0 flex-1 flex-col border-b border-[#c0c0c4] bg-[#e8e8e8]">
        <h2 className="h-[21px] shrink-0 bg-[#cfcfcf] pl-3 text-[12px] leading-[23px] font-bold">Bestellung</h2>
        <div className="mt-[2px] mr-[3px] ml-[3px] flex h-[166px] shrink-0">
          <Labels pad="w-[201px] pr-[13px] pt-[7px]">
            <L htmlFor="bestellnummer">Bestellnummer</L>
            <L htmlFor="pos2">Position</L>
            <L htmlFor="referenz" gap="mt-1">Referenz</L>
            <L htmlFor="artikel" u>Artikel</L>
            <L htmlFor="lieferant" u gap="mt-[2px]">Lieferant</L>
            <L htmlFor="liefer2" u>Lieferadresse</L>
            <L htmlFor="rechnung2" u>Rechnungsadresse</L>
          </Labels>
          <div className="flex-1 border border-[#6f7076] bg-[#eff0f2] pt-[7px] pl-3">
            <Row>
              <div className="mr-1 -ml-px"><Combo id="bestellArt" value="I" width="w-[55px]" active /></div>
              <Field id="bestellnummer" width="w-[193px]" value="PA20-00094/50" dots />
              <div className="ml-[3px] flex">
                <Push width="w-[152px]">Bestellung anlegen (F8)</Push>
                <Push width="-ml-px w-[17px]"><DownTriangle /></Push>
              </div>
            </Row>
            <Row gap="gap-1">
              <Field id="pos2" width="w-[53px]" value="10" dots />
              <Push width="w-[105px]">Neue Pos. (F8)</Push>
            </Row>
            <Row gap="mt-1"><Field id="referenz" width="w-[158px]" dots /></Row>
            <Row>
              <Field id="artikel" width="w-[198px]" value="CT-SN350L-TOP8" dots tone="gray" />
              <div className="mr-[31px] ml-[6px]"><Field id="artikel2" label="Artikel Zusatz" width="w-[73px]" tone="gray" /></div>
              <Field id="artikel3" label="Artikelbezeichnung" width="w-[298px]" value="*Ölpumpe*" tone="gray" />
              <div className="ml-[5px]"><Push width="w-[108px]"><EditIcon />Bearbeiten</Push></div>
            </Row>
            <div className="mt-[2px] flex">
              <div className="w-[307px]">
                <Row><Field id="lieferant" width="w-[158px]" value="#" dots tone="gray" /></Row>
                <Row><Field id="liefer2" width="w-[158px]" value="#" dots /></Row>
                <Row><Field id="rechnung2" width="w-[158px]" value="#" dots /></Row>
              </div>
              <Memo id="adresse2" label="Adresse" width="w-[283px]" height="h-[63px]" value={"PRODAT Unternehmensgruppe\nParallelstraße 987\n01099 Dresden"} />
            </div>
          </div>
        </div>
        <div className="mr-[3px] ml-[3px] pb-px">
          <GridBar>
            <Nav kinds={["first", "prev", "next", "last", "plus", "minus", "check", "cancel", "refresh"]} size="h-5 w-[33px]" />
          </GridBar>
        </div>
        <div className="mr-[3px] ml-[3px] flex min-h-0 flex-1">
          <div className="flex min-w-0 flex-1 flex-col border border-[#7f828c] bg-white">
            <PurchaseTable />
            <div className="flex-1" />
            <div className="flex h-[25px] w-[1078px] shrink-0 border-t-2 border-r border-[#a0a0a0] bg-[#f0f0f0] text-[12px]">
              <span className="w-3 border-r border-[#a0a0a0]" />
              <span className="my-px ml-[2px] flex w-7 items-center justify-end border border-[#d4d8da] bg-[#e6eaec] pr-[2px]">1</span>
              <span className="my-px ml-[482px] flex w-[76px] items-center justify-end border border-[#d4d8da] bg-[#e6eaec] pr-[2px]">5,00</span>
            </div>
          </div>
          <div className="flex w-[3px] flex-col items-center justify-center gap-[2px] bg-[#dfe1e6]">
            {[0, 1, 2, 3, 4].map((i) => (
              <span key={i} className="h-[2px] w-[2px] bg-[#8f8f95]" />
            ))}
          </div>
        </div>
        <div className="ml-[3px]"><ViewTabs /></div>
      </div>
      <div className="my-[2px] flex h-[3px] shrink-0 items-center justify-center gap-[2px] bg-[#dcdee2]">
        {[0, 1, 2, 3, 4].map((i) => (
          <span key={i} className="h-[2px] w-[3px] bg-[#8f8f95]" />
        ))}
      </div>
      <Tabs
        items={[
          { n: "1", text: "Allgemein", on: true, width: "w-[104px]", pad: "pl-2" },
          { n: "2", text: "Rahmenbestellung", width: "w-[150px]", pad: "pl-[10px]" },
          { n: "3", text: "Positions-Informationen", on: true, width: "w-[178px]", pad: "pl-[7px]" },
          { n: "6", text: "Artikelprüfung", width: "w-[120px]", pad: "pl-3" },
          { n: "7", text: "Organisatorische Ansicht", width: "w-[183px]", pad: "pl-3" },
          { n: "8", text: "Teillieferungen", width: "w-[125px]", pad: "pl-3" },
        ]}
      />
      <div className="flex h-[284px] shrink-0 border-b border-[#6f7076]">
        <Labels pad="w-[201px] pr-[14px] pt-[6px]">
          <L htmlFor="erfasst2">Erfasst</L>
          <L htmlFor="zust2">Ansprechpartner Lieferant</L>
          <L htmlFor="zust2">Zust. Mitarbeiter (Intern)</L>
          <L htmlFor="projekt2" u gap="mt-[6px]">Projekt-Nr.</L>
          <L htmlFor="summe2" gap="mt-[54px]">Summe Bestellung</L>
          <L htmlFor="auftrag2" u gap="mt-9">Auftrag</L>
          <L htmlFor="kurz">Kunden-Kurzname</L>
          <L htmlFor="artikel4">Artikel</L>
        </Labels>
        <div className="relative flex min-w-0 flex-1 overflow-hidden border-t border-l border-[#6f7076] bg-[#eff0f2] pt-[6px] pl-3">
          <div className="w-[321px] shrink-0">
            <Row><Field id="erfasst2" width="w-[102px]" value="18.03.2020" date /></Row>
            <Row />
            <Row><Field id="zust2" width="w-[58px]" dots /></Row>
            <Row gap="mt-[6px]"><Field id="projekt2" width="w-[198px]" dots /></Row>
            <div className="-ml-px">
              <Row gap="mt-2">
                <span className="w-[158px]"><Check id="geschl2">Pos. geschlossen</Check></span>
                <Check id="storn2">Pos. storniert</Check>
              </Row>
              <Rule className="mt-2 mb-[15px] w-[179px]" />
            </div>
            <Row><Field id="summe2" width="w-[102px]" value="1.750,00" right tone="gray" /></Row>
            <Rule className="mt-[26px] mb-2 w-[179px]" />
            <Row gap="gap-2">
              <Field id="auftragArt2" label="Auftragsart" width="w-[31px]" value="E" tone="gray" />
              <Field id="auftrag2" width="w-[157px]" value="AG20-00094" tone="gray" />
              <Field id="auftragPos" label="Auftragsposition" width="w-[47px]" value="50" right tone="gray" />
            </Row>
            <Row>
              <Field id="kurz" width="w-[251px]" value="Automobile AG" tone="gray" />
              <label htmlFor="termin" className="mr-2 ml-auto text-[11px]">Termin</label>
            </Row>
            <Row>
              <Field id="artikel4" width="w-[196px]" value="CT-SN350L-TOP8" tone="gray" />
              <label htmlFor="menge" className="mr-2 ml-auto text-[11px]">Menge verkauft</label>
            </Row>
          </div>
          <div className="shrink-0">
            <div className="flex gap-[7px] pt-[2px]">
              <div>
                <Small htmlFor="textintern">Positionstext intern</Small>
                <div className="mt-px"><Memo id="textintern" width="w-[143px]" height="h-[49px]" /></div>
              </div>
              <div>
                <Small htmlFor="textextern">Positions</Small>
                <div className="mt-px"><Memo id="textextern" width="w-[143px]" height="h-[49px]" /></div>
              </div>
            </div>
            <div className="mt-[34px] pl-1">
              <Row><Check id="sperr" bold={false}>Sperrstatus</Check></Row>
            </div>
            <div className="mt-[103px] pl-px">
              <Row><Field id="termin" width="w-[87px]" tone="gray" /></Row>
              <Row gap="gap-1">
                <Field id="menge" width="w-[87px]" value="5,00" right tone="gray" />
                <Field id="menge2" label="Menge verkauft gesamt" width="w-[86px]" value="5,00" right tone="gray" />
              </Row>
            </div>
          </div>
          <div className="absolute top-0 right-[3px] bottom-0 flex w-1 flex-col items-center justify-center gap-[2px] border-l border-white bg-[#e2e4e9]">
            {[0, 1, 2, 3, 4].map((i) => (
              <span key={i} className="h-[2px] w-[2px] bg-[#8f8f95]" />
            ))}
          </div>
        </div>
        <SidePanel />
      </div>
      <div className="flex h-5 shrink-0 gap-[2px] pt-[2px] font-['Noto_Sans',sans-serif] text-[11px]">
        <Cell width="w-[62px]" align="justify-end pr-[5px]">Erstellt:</Cell>
        <Cell width="w-[177px]" align="pl-[2px]">2020-03-18</Cell>
        <Cell width="w-[79px]"><a href="#bearbeitet2" className="text-[#0000ff] underline">Bearbeitet:</a></Cell>
        <Cell width="w-[178px]" align="pl-[2px]">2020-03-18</Cell>
        <Cell width="w-[99px]" align="justify-end pr-[5px]">Wiedervorlage:</Cell>
        <Cell width="w-[87px]">
          <button type="button" className="h-4 w-[83px] rounded-[3px] border border-[#8a909b] bg-[linear-gradient(#ffffff,#eff2f5_45%,#cdd6de_52%,#ffffff)] text-[10px] leading-3 font-bold underline">**</button>
        </Cell>
        <Cell width="w-[77px]"><a href="#dokument" className="text-[#0000ff] underline">Dokument</a></Cell>
        <Cell width="w-[97px]"><a href="#notizen" className="text-[#0000ff] underline">Notizen</a></Cell>
        <Cell width="w-[102px]"><a href="#softlink" className="text-[#8a8a8a] underline">Softlink</a></Cell>
        <Cell width="flex-1" align="justify-end">
          <svg width="12" height="12" viewBox="0 0 12 12" stroke="#999">
            <path d="M1 12L12 1M5 12L12 5M9 12L12 9" />
          </svg>
        </Cell>
      </div>
    </div>
  </section>
);

/* ---------- side bar with markers ---------- */

const SideTools = () => (
  <nav className="absolute top-8 left-[26px] flex h-[250px] w-[27px] flex-col items-center border border-[#111] bg-[#eff0f2]">
    {[
      { n: "Beenden", i: <DoorIcon /> },
      { n: "Einkauf", i: <CartIcon /> },
      { n: "Produktion", i: <GearIcon /> },
      { n: "Dokumente", i: <DocsIcon /> },
      { n: "Lager", i: <CrateIcon /> },
      { n: "Notizen", i: <NoteIcon /> },
      { n: "Paket", i: <CubeIcon /> },
      { n: "Löschen", i: <RedXIcon /> },
    ].map((t) => (
      <button key={t.n} type="button" aria-label={t.n} className="flex h-[22px] w-full items-center justify-center pr-1">
        {t.i}
      </button>
    ))}
  </nav>
);

export default function App() {
  return (
    <main className="relative h-screen min-h-[983px] overflow-hidden bg-white font-['Liberation_Sans',Arial,sans-serif] text-black">
      <SideTools />
      <OrderWindow />
      <PurchaseWindow />
      <div className="pointer-events-none absolute top-[51px] left-[27px] h-[26px] w-[25px] border-[3px] border-[#ff6a00]" />
      <div className="pointer-events-none absolute top-[74px] left-[27px] h-[26px] w-[25px] border-[3px] border-[#ff6a00]" />
      <div className="absolute top-12 left-0 flex h-[26px] w-[26px] items-center justify-center bg-[#ff6a00] text-[24px] font-bold text-white">1</div>
      <div className="absolute top-[77px] left-0 flex h-[26px] w-[26px] items-center justify-center bg-[#ff6a00] text-[24px] font-bold text-white">2</div>
      <svg className="pointer-events-none absolute top-[60px] left-[50px]" width="436" height="120" viewBox="0 0 436 120">
        <path d="M2 4.500L418 108.500" stroke="#ff6a00" strokeWidth="3" />
        <path d="M417 104L433 114.500L414 115Z" fill="#ff6a00" stroke="#ff6a00" />
      </svg>
    </main>
  );
}
